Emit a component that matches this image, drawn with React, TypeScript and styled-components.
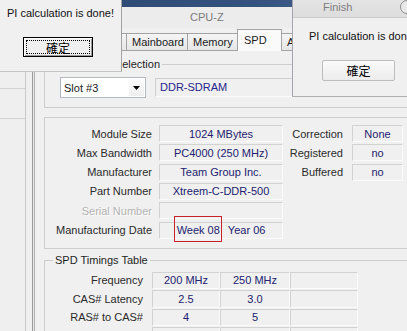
import React from "react";
import styled, { createGlobalStyle } from "styled-components";

const Global = createGlobalStyle`
  html, body { margin: 0; padding: 0; background: #efefef; }
  body { font-family: "Liberation Sans", Arial, sans-serif; font-size: 11px; color: #1e1e1e; }
  * { box-sizing: border-box; }
`;

const Desktop = styled.div`
  position: relative;
  width: 407px;
  height: 331px;
  overflow: hidden;
  background: #efefef;
`;

/* ---------- window behind, on the far left ---------- */
const BackWindow = styled.div`
  position: absolute;
  left: 0;
  top: 72px;
  width: 32px;
  bottom: 0;
  display: flex;
`;
const BackList = styled.div`
  width: 26px;
  border-right: 1px solid #c9c9c9;
  display: flex;
  flex-direction: column;
  padding-top: 16px;
`;
const BackRow = styled.div<{ $h: number }>`
  height: ${(p) => p.$h}px;
  border-top: 1px solid #d3d3d3;
`;

/* ---------- CPU-Z window ---------- */
const CpuzWindow = styled.div`
  position: absolute;
  left: 32px;
  top: 0;
  width: 420px;
  height: 360px;
  border-left: 1px solid #9a9a9a;
  box-shadow: inset 1px 0 0 #e9e9e9, inset 2px 0 0 #b0b0b0;
  background: #f0f0f0;
  display: flex;
  flex-direction: column;
`;
const TitleGlass = styled.div`
  height: 7px;
  background: linear-gradient(90deg, #2c4770 0%, #34537f 55%, #4b6991 80%, #7390b4 100%);
`;
const Caption = styled.div`
  height: 21px;
  line-height: 21px;
  padding-left: 157px;
  color: #7a7a7a;
  background: #ececec;
`;
const TabStrip = styled.div`
  height: 22px;
  display: flex;
  align-items: flex-end;
  padding-left: 5px;
`;
const Tab = styled.div<{ $w: number; $active?: boolean }>`
  width: ${(p) => p.$w}px;
  margin-left: -1px;
  border: 1px solid #a3a3a3;
  border-bottom: none;
  color: #1a1a1a;
  white-space: nowrap;
  overflow: hidden;
  ${(p) =>
    p.$active
      ? `
    height: 22px;
    margin-bottom: -1px;
    padding: 2px 0 0 6px;
    line-height: 17px;
    background: #fafafa;
    position: relative;
    z-index: 1;
  `
      : `
    height: 17px;
    padding-left: 5px;
    line-height: 16px;
    background: linear-gradient(#f5f5f5, #e6e6e6);
  `}
`;
const Panel = styled.div`
  flex: 1;
  border-top: 1px solid #a3a3a3;
  padding-left: 11px;
  display: flex;
  flex-direction: column;
  align-items: flex-start;
`;
const Group = styled.fieldset<{ $mt: number; $pt: number; $pb: number }>`
  margin: ${(p) => p.$mt}px 0 0 0;
  width: 400px;
  min-width: 0;
  border: 1px solid #cdcdcd;
  padding: ${(p) => p.$pt}px 0 ${(p) => p.$pb}px 0;
`;
const Legend = styled.legend<{ $ml: number }>`
  margin-left: ${(p) => p.$ml}px;
  padding: 0 2px;
  line-height: 13px;
  color: #1e1e1e;
`;

/* selection row */
const SelectionRow = styled.div`
  display: flex;
  align-items: center;
  gap: 9px;
  padding-left: 15px;
`;
const Combo = styled.div`
  width: 86px;
  height: 21px;
  background: #fff;
  border: 1px solid #b4b9c0;
  display: flex;
  align-items: center;
  justify-content: space-between;
`;
const ComboText = styled.span`
  padding-left: 3px;
  color: #1b1b1b;
`;
const ComboArrow = styled.span`
  width: 15px;
  height: 17px;
  margin-right: 1px;
  background: linear-gradient(#fbfbfb, #eeeeee);
  display: flex;
  align-items: center;
  justify-content: center;
`;
const Field = styled.div`
  width: 170px;
  height: 19px;
  line-height: 17px;
  padding-left: 4px;
  border: 1px solid;
  border-color: #cfcfcf #fbfbfb #fbfbfb #cfcfcf;
  color: #25258a;
`;

/* module info */
const ModuleGrid = styled.div`
  display: grid;
  grid-template-columns: 114px 124px 69px 51px;
  grid-auto-rows: 17px;
  row-gap: 2.33px;
`;
const Label = styled.div<{ $pr: number; $disabled?: boolean }>`
  display: flex;
  align-items: center;
  justify-content: flex-end;
  padding-right: ${(p) => p.$pr}px;
  white-space: nowrap;
  color: ${(p) => (p.$disabled ? "#b3b3b3" : "#2a2a2a")};
  text-shadow: ${(p) => (p.$disabled ? "1px 1px 0 #ffffff" : "none")};
`;
const Cell = styled.div`
  position: relative;
  display: flex;
  align-items: center;
  justify-content: center;
  gap: 8px;
  white-space: nowrap;
  border: 1px solid;
  border-color: #d2d2d2 #fbfbfb #fbfbfb #d2d2d2;
  color: #22226e;
`;
const RedMark = styled.span`
  position: absolute;
  left: 14px;
  top: -7px;
  width: 48px;
  height: 26px;
  border: 1px solid #c8232a;
`;

/* timings */
const TimingGrid = styled.div`
  display: grid;
  grid-template-columns: 107px 68px 70px 68px;
  grid-auto-rows: 17.5px;
  row-gap: 1px;
`;

/* ---------- dialogs ---------- */
const LeftDialog = styled.div`
  position: absolute;
  left: 0;
  top: 0;
  width: 122px;
  height: 72px;
  background: #f0f0f0;
  border-right: 1px solid #a2a2a2;
  border-bottom: 1px solid #c4c4c4;
  padding: 7px 0 0 7px;
  display: flex;
  flex-direction: column;
`;
const Message = styled.div`
  line-height: 13px;
  color: #111;
  white-space: nowrap;
`;
const CJK = `"Noto Sans CJK TC", "Noto Sans CJK SC", sans-serif`;
const DefaultButton = styled.div`
  margin: 17px 0 0 16px;
  width: 70px;
  height: 20px;
  border: 1px solid #000;
  background: #f0f0f0;
  box-shadow: inset 1px 1px 0 #fff, inset -1px -1px 0 #9a9a9a;
  outline: 1px dotted #000;
  outline-offset: -4px;
  display: flex;
  align-items: center;
  justify-content: center;
  font-family: ${CJK};
  font-size: 12px;
  color: #000;
`;

const FinishDialog = styled.div`
  position: absolute;
  left: 292px;
  top: 0;
  width: 150px;
  height: 97px;
  background: #f0f0f0;
  border-left: 1px solid #a3a7ad;
  border-bottom: 1px solid #b0b0b0;
  display: flex;
  flex-direction: column;
`;
const FinishTitle = styled.div`
  height: 18px;
  border-bottom: 1px solid #cdcdcd;
  background: linear-gradient(#e4e4e4, #dddddd);
  display: flex;
  align-items: flex-start;
  padding-left: 30px;
  line-height: 14px;
  color: #7d7d7d;
`;
const TitleIcon = styled.svg`
  margin-left: 47px;
  flex: none;
`;
const FinishBody = styled.div`
  padding: 12px 0 0 16px;
  display: flex;
  flex-direction: column;
`;
const PlainButton = styled.div`
  margin: 17px 0 0 13px;
  width: 73px;
  height: 21px;
  border: 1px solid #bdbdbd;
  border-radius: 2px;
  background: linear-gradient(#fafafa, #ececec);
  display: flex;
  align-items: center;
  justify-content: center;
  font-family: ${CJK};
  font-size: 12px;
  color: #000;
`;

const tabs = [
  { key: "cpu", label: "", w: 42 },
  { key: "cache", label: "", w: 49 },
  { key: "mb", label: "Mainboard", w: 62 },
  { key: "mem", label: "Memory", w: 51 },
  { key: "spd", label: "SPD", w: 45, active: true },
  { key: "about", label: "About", w: 12 },
];

const moduleRows = [
  { label: "Module Size", value: "1024 MBytes", rl: "Correction", rv: "None" },
  { label: "Max Bandwidth", value: "PC4000 (250 MHz)", rl: "Registered", rv: "no" },
  { label: "Manufacturer", value: "Team Group Inc.", rl: "Buffered", rv: "no" },
  { label: "Part Number", value: "Xtreem-C-DDR-500" },
  { label: "Serial Number", value: "", disabled: true },
];

const timingRows = [
  { key: "f", label: "Frequency", values: ["200 MHz", "250 MHz", ""] },
  { key: "cl", label: "CAS# Latency", values: ["2.5", "3.0", ""] },
  { key: "rcd", label: "RAS# to CAS#", values: ["4", "5", ""] },
  { key: "rp", label: "", values: ["", "", ""] },
];

export default function App() {
  return (
    <>
      <Global />
      <Desktop>
        <BackWindow>
          <BackList>
            <BackRow $h={30} />
            <BackRow $h={10} />
          </BackList>
        </BackWindow>

        <CpuzWindow>
          <TitleGlass />
          <Caption>CPU-Z</Caption>
          <TabStrip>
            {tabs.map((t) => (
              <Tab key={t.key} $w={t.w} $active={t.active}>
                {t.label}
              </Tab>
            ))}
          </TabStrip>
          <Panel>
            <Group $mt={7} $pt={6} $pb={9}>
              <Legend $ml={3}>Memory Slot Selection</Legend>
              <SelectionRow>
                <Combo>
                  <ComboText>Slot #3</ComboText>
                  <ComboArrow>
                    <svg width="7" height="4" viewBox="0 0 7 4">
                      <path d="M0 0h7L3.5 4z" fill="#000" />
                    </svg>
                  </ComboArrow>
                </Combo>
                <Field>DDR-SDRAM</Field>
              </SelectionRow>
            </Group>

            <Group $mt={9} $pt={7} $pb={9}>
              <ModuleGrid>
                {moduleRows.map((r) => (
                  <React.Fragment key={r.label}>
                    <Label $pr={7} $disabled={r.disabled}>
                      {r.label}
                    </Label>
                    <Cell>{r.value}</Cell>
                    {r.rl ? <Label $pr={9}>{r.rl}</Label> : <span />}
                    {r.rv ? <Cell>{r.rv}</Cell> : <span />}
                  </React.Fragment>
                ))}
                <Label $pr={7}>Manufacturing Date</Label>
                <Cell>
                  <RedMark />
                  <span>Week 08</span>
                  <span>Year 06</span>
                </Cell>
              </ModuleGrid>
            </Group>

            <Group $mt={5} $pt={5} $pb={6}>
              <Legend $ml={8}>SPD Timings Table</Legend>
              <TimingGrid>
                {timingRows.map((r) => (
                  <React.Fragment key={r.key}>
                    <Label $pr={9}>{r.label}</Label>
                    {r.values.map((v, i) => (
                      <Cell key={i}>{v}</Cell>
                    ))}
                  </React.Fragment>
                ))}
              </TimingGrid>
            </Group>
          </Panel>
        </CpuzWindow>

        <LeftDialog>
          <Message>PI calculation is done!</Message>
          <DefaultButton>確定</DefaultButton>
        </LeftDialog>

        <FinishDialog>
          <FinishTitle>
            <span>Finish</span>
            <TitleIcon width="16" height="16" viewBox="0 0 16 16">
              <circle cx="8" cy="7" r="6.5" fill="#e9e9e9" stroke="#8f8f8f" />
            </TitleIcon>
          </FinishTitle>
          <FinishBody>
            <Message>PI calculation is done!</Message>
            <PlainButton>確定</PlainButton>
          </FinishBody>
        </FinishDialog>
      </Desktop>
    </>
  );
}
